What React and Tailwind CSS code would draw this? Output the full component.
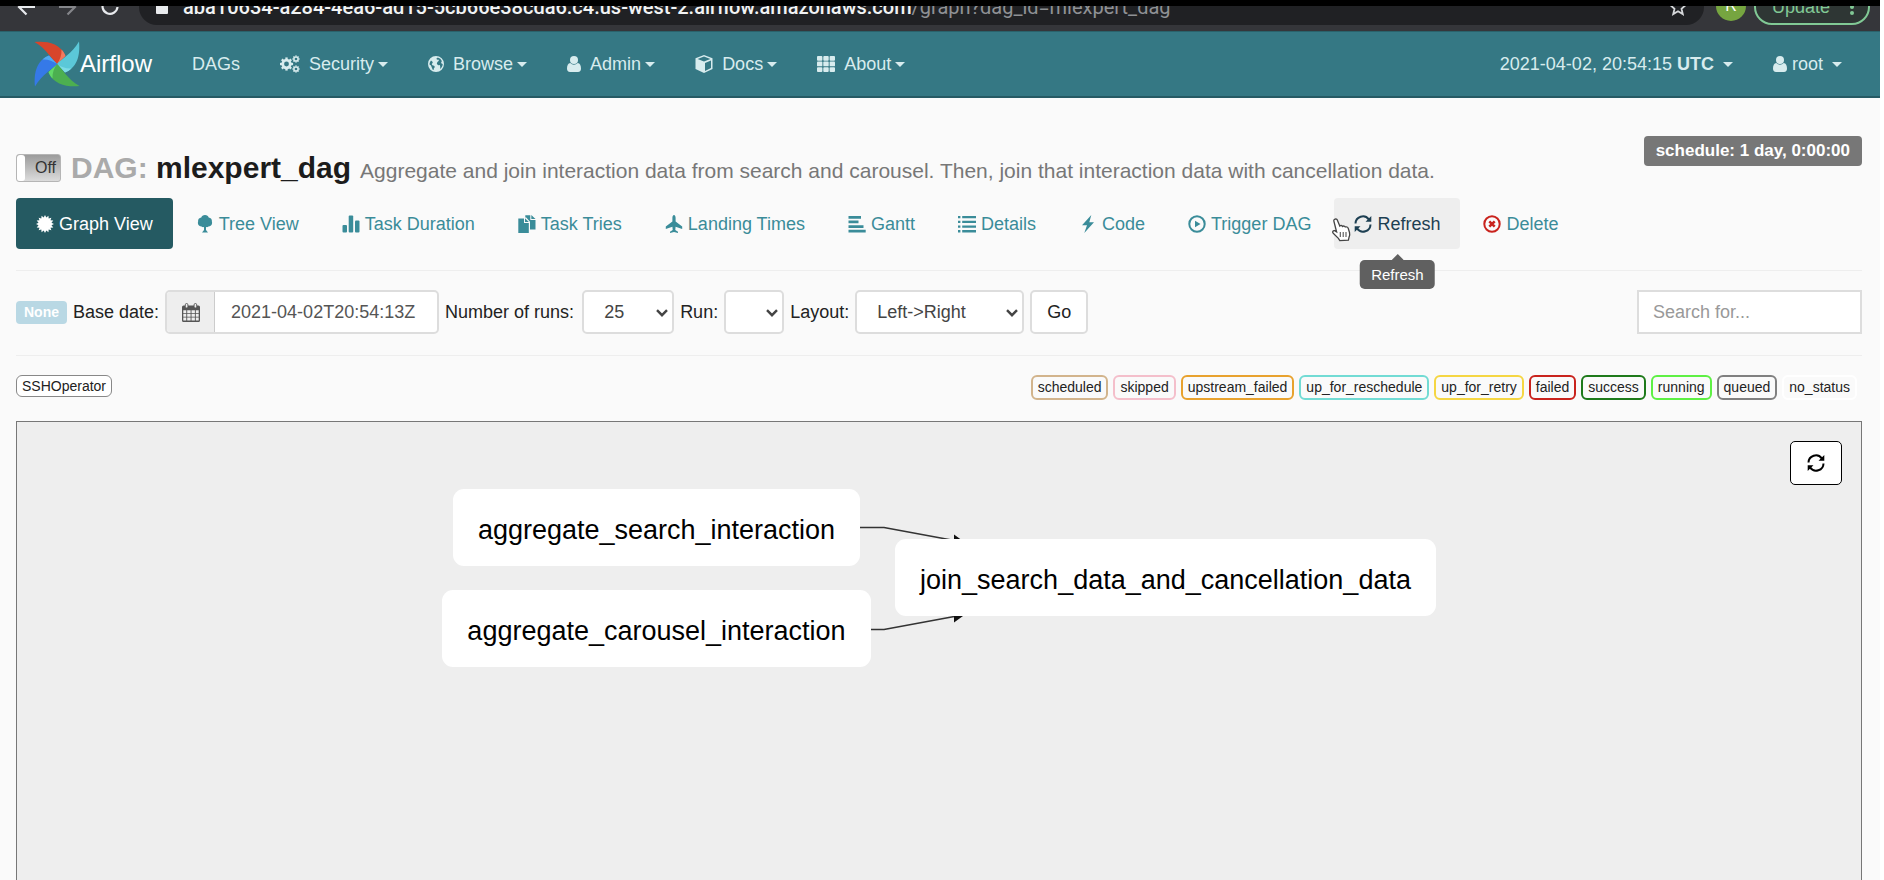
import React from 'react';

const starPoints = Array.from({ length: 32 }, (_, i) => {
  const r = i % 2 ? 6.6 : 9;
  const a = (i * Math.PI) / 16;
  return `${(9 + r * Math.sin(a)).toFixed(2)},${(9 - r * Math.cos(a)).toFixed(2)}`;
}).join(' ');

function Glyph({ children, className = 'size-[18px]', box = '0 0 18 18' }) {
  return (
    <svg viewBox={box} fill="currentColor" aria-hidden="true" className={`shrink-0 ${className}`}>
      {children}
    </svg>
  );
}

const Certificate = () => <Glyph><polygon points={starPoints} /></Glyph>;
const Tree = () => (
  <Glyph>
    <path d="M9 0c2 0 3.300 1.200 3.700 2.600C14.800 2.900 16.200 4.600 15.900 6.600c.9 2.700-1.200 5.200-3.500 4.900-.8.700-1.500.800-2.400.500V15l2 2.500H6L8 15v-3c-.900.300-1.600.200-2.400-.500C3.300 11.800 1.200 9.300 2.100 6.600 1.800 4.600 3.200 2.900 5.300 2.600 5.700 1.200 7 0 9 0z" />
  </Glyph>
);
const Stats = () => (
  <Glyph>
    <rect x="0.500" y="10" width="4.500" height="7.500" rx="1" />
    <rect x="6.700" y="0.500" width="4.500" height="17" rx="1" />
    <rect x="13" y="5.500" width="4.500" height="12" rx="1" />
  </Glyph>
);
const Duplicate = () => (
  <Glyph>
    <path d="M.3 3.400H6v4.700h4.800V18H.3z" />
    <path d="M7 3.200l3.800 3.800H7z" />
    <path d="M7.300.300h5v4.700h5.200V14.600H12V6.800L8.200 2.600h-.9z" />
    <path d="M13.300 0l4.200 4h-4.200z" />
  </Glyph>
);
const Plane = () => (
  <Glyph>
    <path d="M9 0c1 0 1.600 1.400 1.600 3v3.600l6.600 5v2.500l-6.600-2.300-.3 3.200 2.700 1.800V18L9 17.100 5 18v-1.200L7.700 15l-.3-3.200L.8 14.100v-2.500l6.600-5V3C7.400 1.400 8 0 9 0z" />
  </Glyph>
);
const AlignLeft = () => (
  <Glyph>
    <path d="M.5 1H13v2.700H.5zM.5 5.600h10v2.700H.5zM.5 10.200h15v2.700H.5zM.5 14.800h17.200v2.700H.5z" />
  </Glyph>
);
const List = () => (
  <Glyph>
    <path d="M0 1h2.400v2.300H0zM4.200 1H18v2.300H4.200zM0 5.700h2.400V8H0zM4.200 5.700H18V8H4.200zM0 10.400h2.400v2.300H0zM4.200 10.400H18v2.300H4.200zM0 15.100h2.400v2.300H0zM4.200 15.100H18v2.300H4.200z" />
  </Glyph>
);
const Flash = () => (
  <Glyph>
    <path d="M12.300 0L3 10.300h5L5.300 18 15 7.300h-4.700z" />
  </Glyph>
);
const PlayCircle = () => (
  <Glyph>
    <circle cx="9" cy="9" r="7.700" fill="none" stroke="currentColor" strokeWidth="2" />
    <path d="M7 5.700L12.500 9 7 12.300z" />
  </Glyph>
);
const Refresh = () => (
  <Glyph>
    <path d="M1.500 8.600A7.400 7.400 0 0 1 14.800 4.300M16.500 9.400A7.400 7.400 0 0 1 3.200 13.700" fill="none" stroke="currentColor" strokeWidth="2" />
    <path d="M17.300.900v5.800h-5.800zM.7 17.100v-5.800h5.800z" />
  </Glyph>
);
const RemoveCircle = () => (
  <Glyph className="size-[18px] text-[#c9231d]">
    <circle cx="9" cy="9" r="7.700" fill="none" stroke="currentColor" strokeWidth="2" />
    <path d="M6.300 6.300l5.400 5.400M11.700 6.300l-5.400 5.400" stroke="currentColor" strokeWidth="2.500" />
  </Glyph>
);

const Cog = ({ x, y, s }) => (
  <g transform={`translate(${x} ${y}) scale(${s})`}>
    <circle r="4.200" fill="none" stroke="currentColor" strokeWidth="3" />
    {[0, 45, 90, 135, 180, 225, 270, 315].map((a) => (
      <rect key={a} x="-1.300" y="-7.300" width="2.600" height="2.600" transform={`rotate(${a})`} />
    ))}
  </g>
);
const Cogs = () => (
  <Glyph box="0 0 20 18" className="h-[18px] w-5">
    <Cog x={6.500} y={9} s={0.9} />
    <Cog x={16} y={4} s={0.5} />
    <Cog x={16} y={14} s={0.5} />
  </Glyph>
);
const Globe = () => (
  <Glyph box="0 0 16 16" className="size-4">
    <path
      fillRule="evenodd"
      d="M8 0a8 8 0 1 1 0 16A8 8 0 0 1 8 0zM9.800 1.600L8.300 2.800l.9 1 1.200-.2.500 1.200-1.500 1.300-.6 1.700 1.300 1.400 1.700-.2.500 1.900-.3 2.100c1.700-1.200 2.700-2.900 2.700-5l-1.200-.6-.400-1.500.9-.700A6.800 6.800 0 0 0 9.800 1.600zM3 4.500C2 5.700 1.500 7 1.500 8.500l1.500 1 .7 1.700 1 2.500.9.400.3-1.800 1-1.300-.800-1.300-1.700-.5-.700-1.200 1.100-1.300-.500-1.300z"
    />
  </Glyph>
);
const User = ({ className = 'h-4 w-[14px]' }) => (
  <Glyph box="0 0 14 16" className={className}>
    <circle cx="7" cy="4" r="4" />
    <path d="M3.300 7.100C1 7.500 0 9.700 0 12.500 0 14.600 1 16 3 16h8c2 0 3-1.400 3-3.500 0-2.800-1-5-3.300-5.400a5.200 5.200 0 0 1-7.400 0z" />
  </Glyph>
);
const Cube = () => (
  <Glyph box="0 0 18 18" className="size-[18px]">
    <path fillRule="evenodd" d="M9 0l8.500 3.300v10.600L9 18 .5 13.900V3.300zM9 1.600L2.600 4 9 6.500 15.400 4zM10 16l6-3V5.600L10 8z" />
  </Glyph>
);
const Th = () => (
  <Glyph box="0 0 18 16" className="h-4 w-[18px]">
    {[0, 6.300, 12.600].map((x) =>
      [0, 5.600, 11.200].map((y) => <rect key={`${x}-${y}`} x={x} y={y} width="5.400" height="4.700" rx="0.900" />)
    )}
  </Glyph>
);
const Caret = () => (
  <Glyph box="0 0 10 5" className="h-[5px] w-[10px]">
    <path d="M0 0h10L5 5z" />
  </Glyph>
);
const Calendar = () => (
  <Glyph box="0 0 18 19" className="h-[19px] w-[18px]">
    <path
      fillRule="evenodd"
      d="M1.500 2.500h15A1.500 1.500 0 0 1 18 4v13.500a1.500 1.500 0 0 1-1.500 1.500h-15A1.500 1.500 0 0 1 0 17.500V4a1.500 1.500 0 0 1 1.500-1.500zM1.300 7.200v2.700h3V7.200zM5.200 7.200v2.700h3.400V7.200zM9.500 7.200v2.700h3.400V7.200zM13.800 7.200v2.700h2.900V7.200zM1.300 10.800v2.900h3v-2.900zM5.200 10.800v2.900h3.400v-2.900zM9.500 10.800v2.900h3.400v-2.900zM13.800 10.800v2.900h2.900v-2.900zM1.300 14.600v3h3v-3zM5.200 14.600v3h3.400v-3zM9.500 14.600v3h3.400v-3zM13.800 14.600v3h2.900v-3z"
    />
    <rect x="3.300" y="0.500" width="2.600" height="4.500" rx="1.300" fill="#eee" stroke="currentColor" strokeWidth="0.900" />
    <rect x="12.100" y="0.500" width="2.600" height="4.500" rx="1.300" fill="#eee" stroke="currentColor" strokeWidth="0.900" />
  </Glyph>
);

const blades = [
  [0, '#d8452b', '#f17a5f'],
  [90, '#5bc8d8', '#7ddbe6'],
  [180, '#4caf50', '#62d968'],
  [270, '#3579e8', '#52aaf0'],
];
const Pinwheel = () => (
  <svg viewBox="-23 -23 46 46" aria-hidden="true" className="size-[46px] shrink-0">
    {blades.map(([angle, dark, light]) => (
      <g key={angle} transform={`rotate(${angle})`}>
        <path fill={dark} d="M-22.500-22C-12-23 3-22 8.500-8L0 0C-5-4-10-15-22.500-22z" />
        <path fill={light} d="M4.500-14.500C6.500-12.500 7.800-10.300 8.500-8L0 0C3-4 4.800-9 4.500-14.500z" />
      </g>
    ))}
  </svg>
);

function BrowserBar() {
  return (
    <div className="border-t-[6px] border-black bg-[#35363a] pb-[6px]">
      <div className="flex h-[19px] items-end overflow-hidden pl-[17px] pr-[10px]">
        <div className="flex h-9 shrink-0 items-center text-[#e8eaed]">
          <svg viewBox="0 0 18 18" className="size-[18px]" fill="none" stroke="currentColor" strokeWidth="2.200" aria-hidden="true">
            <path d="M18 9H2.500M9.500 1.500L2 9l7.500 7.500" />
          </svg>
          <svg viewBox="0 0 18 18" className="ml-6 size-[18px] text-[#85868a]" fill="none" stroke="currentColor" strokeWidth="2.200" aria-hidden="true">
            <path d="M0 9h15.500M8.500 1.500L16 9l-7.500 7.500" />
          </svg>
          <svg viewBox="0 0 18 18" className="ml-6 size-[18px]" fill="none" stroke="currentColor" strokeWidth="2.200" aria-hidden="true">
            <path d="M15.500 4.500A7.500 7.500 0 1 0 16.500 9M16.500 1v5h-5" />
          </svg>
        </div>
        <div className="ml-5 flex h-9 min-w-0 flex-1 items-center rounded-full bg-[#202124] pl-[17px] pr-[17px]">
          <svg viewBox="0 0 12 16" className="h-4 w-3 shrink-0 text-[#e8eaed]" fill="currentColor" aria-hidden="true">
            <rect y="6" width="12" height="9" rx="1" />
            <path d="M3 6V4a3 3 0 0 1 6 0v2" fill="none" stroke="currentColor" strokeWidth="1.800" />
          </svg>
          <span className="ml-[15px] flex-1 whitespace-nowrap font-[Roboto,sans-serif] text-[20px] leading-6 text-[#8f9195]">
            <span className="font-medium text-[#f1f3f4]">aba10634-a284-4ea6-ad15-5cb66e38cda6.c4.us-west-2.airflow.amazonaws.com</span>
            /graph?dag_id=mlexpert_dag
          </span>
          <svg viewBox="0 0 18 18" className="size-[18px] shrink-0 text-[#d5d7da]" fill="none" stroke="currentColor" strokeWidth="1.800" aria-hidden="true">
            <path d="M9 1.500l2.200 5.100 5.500.5-4.200 3.600 1.300 5.400L9 13.300l-4.800 2.800 1.300-5.400L1.300 7.100l5.500-.5z" />
          </svg>
        </div>
        <div className="mb-1 ml-3 flex size-[30px] shrink-0 items-center justify-center rounded-full bg-[#76a540] text-[16px] text-white">R</div>
        <button className="ml-2 flex h-9 shrink-0 items-center rounded-full border-2 border-[#81c995] bg-[#2e3634] pl-4 pr-[14px] text-[18px] font-medium text-[#81c995]">
          Update
          <svg viewBox="0 0 4 18" className="ml-5 h-[18px] w-1" fill="currentColor" aria-hidden="true">
            <circle cx="2" cy="3" r="2" />
            <circle cx="2" cy="9" r="2" />
            <circle cx="2" cy="15" r="2" />
          </svg>
        </button>
      </div>
    </div>
  );
}

const menus = [
  ['Security', Cogs],
  ['Browse', Globe],
  ['Admin', User],
  ['Docs', Cube],
  ['About', Th],
];

function Navbar() {
  return (
    <nav className="flex h-[67px] items-center border-b-2 border-t border-b-[#265a64] border-t-[#2a626b] bg-[#357884] pl-[34px] text-[#d8ecee]">
      <a href="#home" className="flex items-center pr-5 text-[24px] text-white">
        <Pinwheel />
        Airflow
      </a>
      <a href="#dags" className="px-5">DAGs</a>
      {menus.map(([label, Icon]) => (
        <button key={label} className="flex items-center px-5">
          <Icon />
          <span className="ml-[9px] mr-1">{label}</span>
          <Caret />
        </button>
      ))}
      <div className="ml-auto flex pr-[18px]">
        <button className="flex items-center gap-[9px] px-5">
          <span>2021-04-02, 20:54:15 <b>UTC</b></span>
          <Caret />
        </button>
        <button className="flex items-center gap-[9px] px-5">
          <span className="flex items-center gap-[5px]"><User />root</span>
          <Caret />
        </button>
      </div>
    </nav>
  );
}

function Header() {
  return (
    <header className="flex items-start justify-between">
      <div className="mt-[14px] flex items-center">
        <label className="relative flex h-7 w-[45px] items-center justify-end rounded-[3px] border border-[#b5b5b5] bg-linear-to-b from-[#9c9c9c] to-[#dcdcdc] pr-1 text-[16px] text-[#333]">
          <input type="checkbox" aria-label="Toggle DAG" className="absolute inset-y-0 left-0 m-0 w-2 appearance-none rounded-[3px] bg-white" />
          Off
        </label>
        <div className="ml-[10px] flex items-baseline">
          <h1 className="text-[30px] font-bold leading-9 text-[#1c1c1c]">
            <span className="text-[#aaa]">DAG:</span> mlexpert_dag
          </h1>
          <p className="ml-[9px] text-[21px] text-[#777]">
            Aggregate and join interaction data from search and carousel. Then, join that interaction data with cancellation data.
          </p>
        </div>
      </div>
      <span className="rounded-[4px] bg-[#777] px-3 text-[17px] font-bold leading-[30px] text-white">schedule: 1 day, 0:00:00</span>
    </header>
  );
}

const tabs = [
  ['Graph View', Certificate],
  ['Tree View', Tree],
  ['Task Duration', Stats],
  ['Task Tries', Duplicate],
  ['Landing Times', Plane],
  ['Gantt', AlignLeft],
  ['Details', List],
  ['Code', Flash],
  ['Trigger DAG', PlayCircle],
  ['Refresh', Refresh],
  ['Delete', RemoveCircle],
];
const tabTone = {
  'Graph View': 'bg-[#255a62] text-white',
  Refresh: 'bg-[#eee] text-[#1d3f52]',
};

function Tabs() {
  return (
    <div className="mt-3 flex gap-[3px]">
      {tabs.map(([label, Icon]) => (
        <a key={label} href="#view" className={`relative flex h-[51px] items-center gap-[5px] rounded-[4px] px-5 ${tabTone[label] || 'text-[#3a8c99]'}`}>
          <Icon />
          {label}
          {label === 'Refresh' && (
            <>
              <span role="tooltip" className="absolute left-1/2 top-[62px] z-10 -translate-x-1/2 rounded-[5px] bg-[#606060] px-[11px] text-[15px] leading-[29px] text-white">
                Refresh
                <svg viewBox="0 0 12 6" className="absolute -top-[6px] left-1/2 h-[6px] w-3 -translate-x-1/2" fill="#606060" aria-hidden="true">
                  <path d="M0 6l6-6 6 6z" />
                </svg>
              </span>
              <svg viewBox="0 0 20 24" className="absolute -left-[3px] top-5 z-10 h-6 w-5" aria-hidden="true">
                <path
                  d="M4 1.200c1-.5 2 0 2.400 1L8.800 8c.7-.8 2.300-.7 2.800.4.900-.7 2.300-.4 2.700.6 1.200-.5 2.500 0 2.900 1.300l1.300 4.200c.5 1.800.3 3.200-.5 4.900l-.6 2.800-8.600.4-1.400-2.300-5.200-5.100c-1.200-1.200-.2-2.900 1.400-2.500l2 1.200L2.900 3.300C2.600 2.400 3 1.500 4 1.200z"
                  fill="#fff"
                  stroke="#444"
                  strokeWidth="1.300"
                />
                <path d="M9.300 14v5M12.200 14v5M15 14v5" stroke="#555" strokeWidth="1.100" />
              </svg>
            </>
          )}
        </a>
      ))}
    </div>
  );
}

function Select({ id, options, width }) {
  return (
    <span className={`relative ${width}`}>
      <select id={id} className="h-11 w-full appearance-none rounded-[5px] border-2 border-[#ddd] bg-white pl-5 text-[#444]">
        {options.map((o) => <option key={o}>{o}</option>)}
      </select>
      <svg viewBox="0 0 12 8" className="pointer-events-none absolute right-[6px] top-[19px] h-2 w-3" fill="none" stroke="#444" strokeWidth="2.400" aria-hidden="true">
        <path d="M1 1.200l5 5 5-5" />
      </svg>
    </span>
  );
}

function Filters() {
  return (
    <form className="flex items-center gap-[6px] text-[#222]">
      <span className="rounded-[4px] bg-[#b9d8e4] px-2 text-[14px] font-bold leading-[23px] text-white">None</span>
      <label htmlFor="base_date">Base date:</label>
      <span className="flex h-11 overflow-hidden rounded-[5px] border-2 border-[#ddd] bg-white">
        <span className="flex w-12 items-center justify-center border-r border-[#ccc] bg-[#eee] text-[#555]"><Calendar /></span>
        <input id="base_date" defaultValue="2021-04-02T20:54:13Z" className="w-[222px] px-4 text-[#555]" />
      </span>
      <label htmlFor="num_runs" className="mr-[2px]">Number of runs:</label>
      <Select id="num_runs" options={['25']} width="w-[92px]" />
      <label htmlFor="run">Run:</label>
      <Select id="run" options={['']} width="w-[60px]" />
      <label htmlFor="layout">Layout:</label>
      <Select id="layout" options={['Left->Right']} width="w-[169px]" />
      <button type="button" className="h-11 rounded-[5px] border-2 border-[#ddd] bg-white px-[15px]">Go</button>
      <input aria-label="Search" placeholder="Search for..." className="ml-auto h-11 w-[225px] border-2 border-[#ddd] bg-white px-[14px] placeholder:text-[#999]" />
    </form>
  );
}

const states = [
  ['scheduled', 'border-[#d2b48c]'],
  ['skipped', 'border-[#f4bfcb]'],
  ['upstream_failed', 'border-[#e8a22e]'],
  ['up_for_reschedule', 'border-[#72dbd4]'],
  ['up_for_retry', 'border-[#f5d643]'],
  ['failed', 'border-[#c9231d]'],
  ['success', 'border-[#1e7a1a]'],
  ['running', 'border-[#5ef044]'],
  ['queued', 'border-[#808080]'],
  ['no_status', 'border-white'],
];

function Legend() {
  return (
    <div className="flex items-start text-[14px] text-[#222]">
      <span className="rounded-[6px] border border-[#888] bg-white px-[5px] leading-5">SSHOperator</span>
      <div className="ml-auto flex gap-[5px] pr-[5px]">
        {states.map(([label, border]) => (
          <span key={label} className={`rounded-[6px] border-2 px-[5px] leading-[21px] ${border}`}>{label}</span>
        ))}
      </div>
    </div>
  );
}

const nodes = [
  ['aggregate_search_interaction', 'left-[436px] top-[67px] w-[407px]'],
  ['aggregate_carousel_interaction', 'left-[425px] top-[168px] w-[429px]'],
  ['join_search_data_and_cancellation_data', 'left-[878px] top-[117px] w-[541px]'],
];

function Graph() {
  return (
    <section className="relative mt-[21px] flex-1 overflow-hidden border border-b-0 border-[#777] bg-[#eee]">
      <svg className="absolute left-0 top-0 h-[300px] w-[1000px]" viewBox="0 0 1000 300" fill="none" stroke="#333" strokeWidth="1.600" aria-hidden="true">
        <path d="M843 105.500h24L940 119M854 207.500h13L940 194" />
        <path d="M937 112.500l9 6.500h-9zM937 200.500l9-6.500h-9z" fill="#111" stroke="none" />
      </svg>
      {nodes.map(([label, place]) => (
        <div key={label} className={`absolute flex h-[77px] items-center justify-center rounded-[11px] bg-white pt-1 text-[27px] text-black ${place}`}>
          {label}
        </div>
      ))}
      <button aria-label="Refresh graph" className="absolute right-[19px] top-[19px] flex h-11 w-[52px] items-center justify-center rounded-[5px] border border-black bg-white text-black">
        <Refresh />
      </button>
    </section>
  );
}

export default function App() {
  return (
    <div className="flex h-screen flex-col overflow-hidden bg-white pr-1 font-['Liberation_Sans',Arial,sans-serif] text-[18px] leading-6">
      <BrowserBar />
      <Navbar />
      <main className="flex flex-1 flex-col bg-[#fafafa] pl-4 pr-[18px] pt-[38px]">
        <Header />
        <Tabs />
        <hr className="mb-[19px] mt-[21px] border-[#eee]" />
        <Filters />
        <hr className="mb-[19px] mt-[21px] border-[#eee]" />
        <Legend />
        <Graph />
      </main>
    </div>
  );
}
